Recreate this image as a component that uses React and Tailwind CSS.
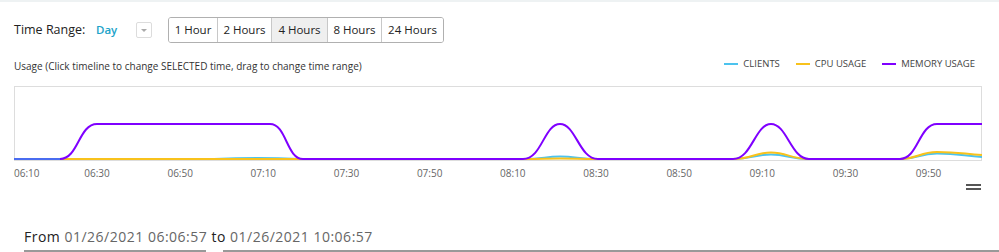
import React from 'react';

const RANGES = [
  { label: '1 Hour', w: 'w-[48px]' },
  { label: '2 Hours', w: 'w-[54px]' },
  { label: '4 Hours', w: 'w-[56px]' },
  { label: '8 Hours', w: 'w-[54px]' },
  { label: '24 Hours', w: 'w-[62px]' },
];
const TICKS = ['06:30', '06:50', '07:10', '07:30', '07:50', '08:10', '08:30', '08:50', '09:10', '09:30', '09:50'];
const LEGEND = [
  { label: 'CLIENTS', color: 'bg-[#4cc3ee]' },
  { label: 'CPU USAGE', color: 'bg-[#f8c21c]' },
  { label: 'MEMORY USAGE', color: 'bg-[#7f00ff]' },
];

// chart coordinates: x = page x - 14, y = page y - 86 (baseline 73, plateau 38)
const MEMORY =
  'M46 73 C64.5 73 64.5 38 83 38 L256 38 C272.5 38 272.5 73 289 73 ' +
  'L509 73 C528 73 530 38 546 38 C562 38 565 73 584 73 ' +
  'L719 73 C738 73 741 38 757 38 C773 38 777 73 795 73 ' +
  'L886 73 C904 73 905 38 923 38 L968 38';
const CLIENTS =
  'M0 73 L200 73 C225 72 250 71.5 285 73 L509 73 C530 73 530 70.5 546 70.5 C562 70.5 565 73 584 73 ' +
  'L719 73 C738 73 741 68.5 757 68.5 C773 68.5 777 73 795 73 ' +
  'L886 73 C904 73 905 67.5 923 67.5 C945 67.5 950 70 968 71';
const CPU =
  'M46 73 L509 73 C530 73 530 72.5 546 72.5 C562 72.5 565 73 584 73 ' +
  'L719 73 C738 73 741 66.5 757 66.5 C773 66.5 777 73 795 73 ' +
  'L886 73 C904 73 905 66 923 66 C945 66 950 68 968 69';

function Chart() {
  return (
    <svg width="969" height="76" className="block ml-[14px] overflow-visible">
      <rect x="0.5" y="0.5" width="967" height="74" fill="none" stroke="#dddddd" />
      <path d="M0 73 L46 73" fill="none" stroke="#4a6cf0" strokeWidth="2" />
      <path d={CLIENTS.replace('M0 73 L200 73', 'M46 73 L200 73')} fill="none" stroke="#4cc3ee" strokeWidth="2" />
      <path d={CPU} fill="none" stroke="#f8c21c" strokeWidth="2" />
      <path d={MEMORY} fill="none" stroke="#7f00ff" strokeWidth="2" />
    </svg>
  );
}

export default function App() {
  return (
    <div className="w-[999px] h-[252px] overflow-hidden bg-white border-t-2 border-[#eef2f3] font-['Open_Sans',sans-serif] text-[#333]">
      {/* time range */}
      <div className="flex items-center h-[26px] mt-[15px] pl-[14px]">
        <span className="w-[82px] text-[12.5px] font-medium text-[#222]">Time Range:</span>
        <span className="w-[40px] text-[11.5px] font-semibold text-[#1ba3c9]">Day</span>
        <div className="w-[16px] h-[16px] border border-[#dcdcdc] rounded-[2px] flex items-center justify-center">
          <div className="w-0 h-0 border-l-[3px] border-r-[3px] border-t-[3px] border-l-transparent border-r-transparent border-t-[#aaa]" />
        </div>
        <div className="ml-[16px] flex h-[26px] border border-[#b0b0b0] rounded-[3px] overflow-hidden">
          {RANGES.map((r, i) => (
            <div
              key={r.label}
              className={`${r.w} flex items-center justify-center text-[11.5px] text-[#222] ${i > 0 ? 'border-l border-[#c8c8c8]' : ''} ${r.label === '4 Hours' ? 'bg-[#efefef]' : 'bg-white'}`}
            >
              {r.label}
            </div>
          ))}
        </div>
      </div>

      {/* usage caption + legend */}
      <div className="flex items-center justify-between mt-[16px] pl-[14px] pr-[24px] h-[14px]">
        <span className="text-[10px] text-[#333]">Usage (Click timeline to change SELECTED time, drag to change time range)</span>
        <div className="flex items-center gap-[16px] -mt-[4px]">
          {LEGEND.map((l) => (
            <div key={l.label} className="flex items-center gap-[5px]">
              <div className={`w-[14px] h-[2px] ${l.color}`} />
              <span className="text-[9.5px] text-[#444]">{l.label}</span>
            </div>
          ))}
        </div>
      </div>

      <div className="mt-[13px]">
        <Chart />
      </div>

      {/* axis */}
      <div className="flex pl-[14px] h-[14px] mt-[4px] text-[10px] leading-[14px] text-[#666]">
        <div className="w-[71px]">06:10</div>
        {TICKS.map((t) => (
          <div key={t} className="w-[84px]">{t}</div>
        ))}
      </div>

      <div className="flex justify-end pr-[18px] mt-[4px]">
        <div className="flex flex-col gap-[2px]">
          <div className="w-[15px] h-[2px] bg-[#555]" />
          <div className="w-[15px] h-[2px] bg-[#555]" />
        </div>
      </div>

      <div className="pl-[24px] mt-[37px] text-[14px] leading-[20px] tracking-[0.5px]">
        <span className="text-[#222]">From </span>
        <span className="text-[#666]">01/26/2021 06:06:57</span>
        <span className="text-[#222]"> to </span>
        <span className="text-[#666]">01/26/2021 10:06:57</span>
      </div>
      <div className="flex pl-[24px] mt-[3px]">
        <div className="w-[182px] h-[2px] bg-[#999]" />
        <div className="ml-[17px] flex-1 h-[2px] bg-[#999]" />
      </div>
    </div>
  );
}
